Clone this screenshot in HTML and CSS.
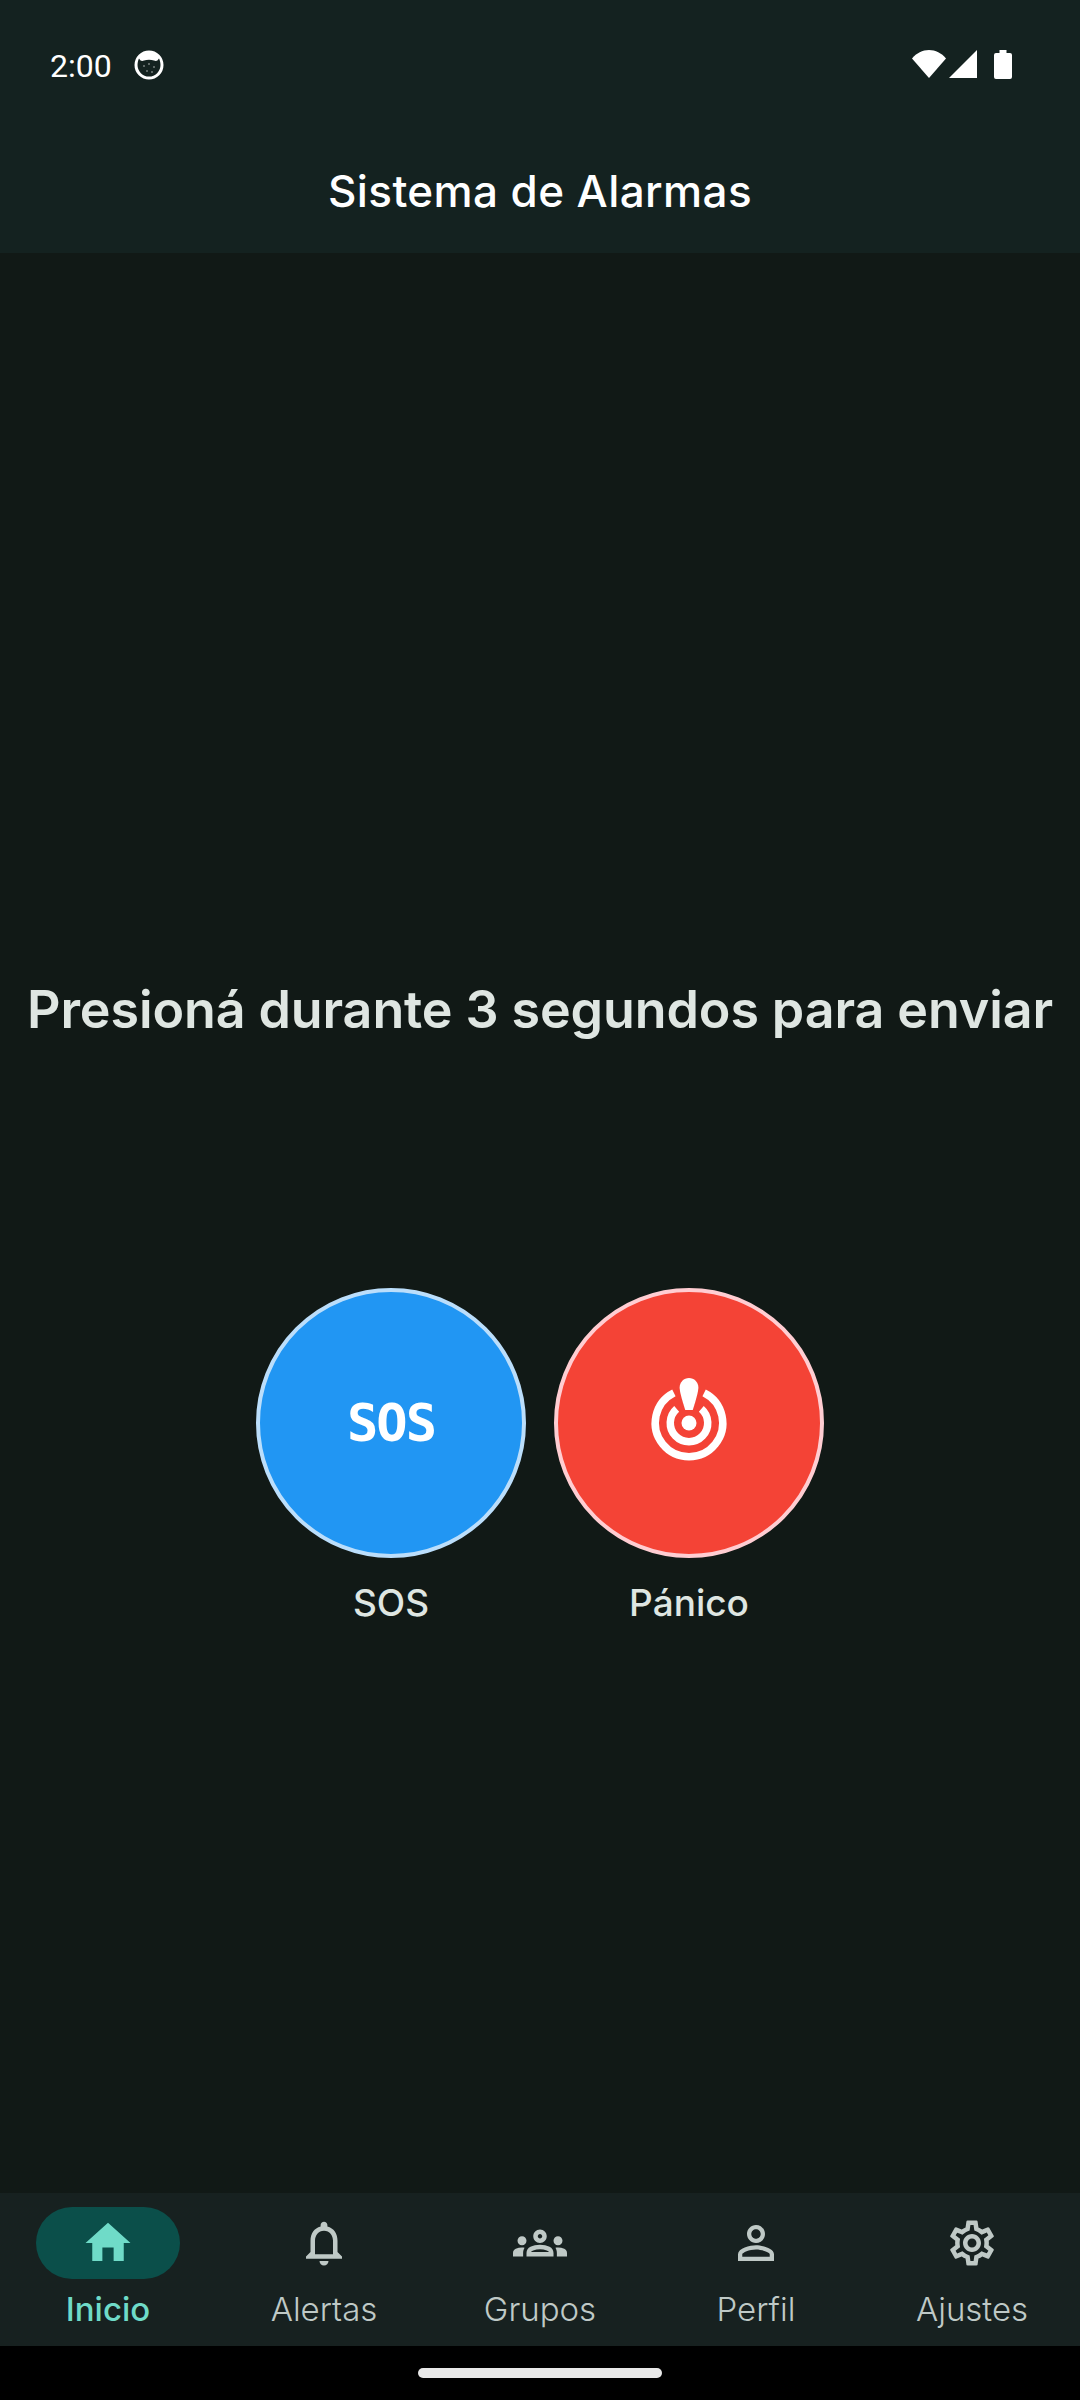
FILE: index.html
```html
<!DOCTYPE html>
<html lang="es">
<head>
	<meta charset="utf-8">
	<title>Sistema de Alarmas</title>
	<link rel="stylesheet" href="styles.css">
</head>
<body>
	<div class="pantalla">
		<header class="cabecera">
			<div class="estado">
				<span class="hora">2:00</span>
				<svg class="ico-notif" viewBox="0 0 30 30"><path fill="#fff" d="M15 0.5a14.5 14.5 0 1 0 0 29a14.5 14.5 0 1 0 0-29z"/><path fill="#142220" d="M5 8.500c1.500 2.500 3 3 5 2c3-1 7-1 10 0c2 1 3.500.5 5-2c1 2 1.500 4.500 1.500 6.500a11.500 11.500 0 0 1-23 0c0-2 .5-4.500 1.500-6.500z"/><g fill="#fff" opacity=".7"><circle cx="10" cy="16" r=".8"/><circle cx="15" cy="14" r=".8"/><circle cx="20" cy="17" r=".8"/><circle cx="13" cy="21" r=".8"/><circle cx="18" cy="22" r=".8"/></g></svg>
				<span class="hueco"></span>
				<svg class="ico-wifi" viewBox="0 0 34 28"><path fill="#fff" d="M17 28L0 8.500C4.500 3 10.500 0 17 0s12.500 3 17 8.500z"/></svg>
				<svg class="ico-red" viewBox="0 0 28 28"><path fill="#fff" d="M28 0v28H0z"/></svg>
				<svg class="ico-bat" viewBox="0 0 18 29"><path fill="#fff" d="M5.500 0h7v3H16a2 2 0 0 1 2 2v22a2 2 0 0 1-2 2H2a2 2 0 0 1-2-2V5a2 2 0 0 1 2-2h3.500z"/></svg>
			</div>
			<h1 class="titulo">Sistema de Alarmas</h1>
		</header>

		<main class="contenido">
			<p class="aviso">Presioná durante 3 segundos para enviar</p>
			<div class="botones">
				<div class="alarma">
					<button class="circulo azul"><span class="sos-marca">SOS</span></button>
					<span class="etiqueta">SOS</span>
				</div>
				<div class="alarma">
					<button class="circulo rojo">
						<svg class="ico-alarma" viewBox="0 0 24 24">
							<path fill="#fff" d="M14.500 2.500c0 1.500-1.500 6-1.500 6h-2S9.500 4 9.500 2.500C9.500 1.120 10.620 0 12 0s2.500 1.120 2.500 2.500z"/>
							<circle fill="#fff" cx="12" cy="12" r="2"/>
							<path fill="none" stroke="#fff" stroke-width="2" d="M7.970 3.950A9 9 0 1 0 16.030 3.950"/>
							<path fill="none" stroke="#fff" stroke-width="2" d="M8.720 8.230A5 5 0 1 0 15.280 8.230"/>
						</svg>
					</button>
					<span class="etiqueta">Pánico</span>
				</div>
			</div>
		</main>

		<nav class="menu">
			<a class="item activo">
				<span class="pastilla"><svg viewBox="0 0 24 24"><path d="M9.500 20v-6h5v6h4.500v-8h3L12 3 2 12h3v8z"/></svg></span>
				<span class="texto">Inicio</span>
			</a>
			<a class="item">
				<span class="pastilla"><svg viewBox="0 0 24 24"><path d="M12 22c1.100 0 2-.9 2-2h-4c0 1.100.89 2 2 2zm6-6v-5c0-3.070-1.640-5.640-4.500-6.320V4c0-.83-.67-1.500-1.500-1.500s-1.500.67-1.500 1.500v.68C7.630 5.360 6 7.920 6 11v5l-2 2v1h16v-1l-2-2zm-2 1H8v-6c0-2.480 1.510-4.500 4-4.500s4 2.020 4 4.500v6z"/></svg></span>
				<span class="texto">Alertas</span>
			</a>
			<a class="item">
				<span class="pastilla"><svg viewBox="0 0 24 24"><path d="M4 13c1.100 0 2-.9 2-2s-.9-2-2-2-2 .9-2 2 .9 2 2 2zm1.130 1.100c-.37-.06-.74-.1-1.130-.1-.99 0-1.930.21-2.780.58C.48 14.900 0 15.620 0 16.430V18h4.500v-1.610c0-.83.23-1.610.63-2.290zM20 13c1.100 0 2-.9 2-2s-.9-2-2-2-2 .9-2 2 .9 2 2 2zm4 3.430c0-.81-.48-1.530-1.220-1.850-.85-.37-1.790-.58-2.780-.58-.39 0-.76.04-1.130.1.4.68.63 1.460.63 2.290V18H24v-1.570zm-7.760-2.780C15.070 13.130 13.630 12.750 12 12.750s-3.070.38-4.240.9C6.680 14.130 6 15.210 6 16.390V18h12v-1.610c0-1.180-.68-2.260-1.760-2.740zM8.070 16c.09-.23.13-.39.91-.69.97-.38 1.990-.56 3.020-.56s2.050.18 3.020.56c.77.3.81.46.91.69H8.070zM12 8c.55 0 1 .45 1 1s-.45 1-1 1-1-.45-1-1 .45-1 1-1m0-2c-1.660 0-3 1.340-3 3s1.340 3 3 3 3-1.340 3-3-1.340-3-3-3z"/></svg></span>
				<span class="texto">Grupos</span>
			</a>
			<a class="item">
				<span class="pastilla"><svg viewBox="0 0 24 24"><path d="M12 5.900c1.160 0 2.100.94 2.100 2.100s-.94 2.100-2.100 2.100S9.900 9.160 9.900 8s.94-2.100 2.100-2.100m0 9c2.970 0 6.100 1.460 6.100 2.100v1.100H5.900V17c0-.64 3.130-2.100 6.100-2.100M12 4C9.790 4 8 5.790 8 8s1.790 4 4 4 4-1.790 4-4-1.790-4-4-4zm0 9c-2.670 0-8 1.340-8 4v3h16v-3c0-2.660-5.330-4-8-4z"/></svg></span>
				<span class="texto">Perfil</span>
			</a>
			<a class="item">
				<span class="pastilla"><svg viewBox="0 0 24 24"><path d="M19.430 12.980c.04-.32.07-.64.07-.98 0-.34-.03-.66-.07-.98l2.110-1.650c.19-.15.24-.42.12-.64l-2-3.460c-.09-.16-.26-.25-.44-.25-.06 0-.12.01-.17.03l-2.490 1c-.52-.4-1.080-.73-1.690-.98l-.38-2.650C14.460 2.180 14.250 2 14 2h-4c-.25 0-.46.18-.49.42l-.38 2.650c-.61.25-1.170.59-1.690.98l-2.490-1c-.06-.02-.12-.03-.18-.03-.17 0-.34.09-.43.25l-2 3.460c-.13.22-.07.49.12.64l2.110 1.650c-.04.32-.07.65-.07.98 0 .33.03.66.07.98l-2.110 1.650c-.19.15-.24.42-.12.64l2 3.460c.09.16.26.25.44.25.06 0 .12-.01.17-.03l2.490-1c.52.4 1.080.73 1.690.98l.38 2.650c.03.24.24.42.49.42h4c.25 0 .46-.18.49-.42l.38-2.650c.61-.25 1.170-.59 1.690-.98l2.490 1c.06.02.12.03.18.03.17 0 .34-.09.43-.25l2-3.460c.12-.22.07-.49-.12-.64l-2.110-1.650zm-1.980-1.710c.04.31.05.52.05.73 0 .21-.02.43-.05.73l-.14 1.130.89.7 1.080.84-.7 1.210-1.270-.51-1.040-.42-.9.68c-.43.32-.84.56-1.250.73l-1.060.43-.16 1.130-.2 1.350h-1.400l-.19-1.350-.16-1.130-1.060-.43c-.43-.18-.83-.41-1.230-.71l-.91-.7-1.060.43-1.270.51-.7-1.210 1.080-.84.89-.7-.14-1.130c-.03-.31-.05-.54-.05-.74s.02-.43.05-.73l.14-1.130-.89-.7-1.080-.84.7-1.210 1.270.51 1.040.42.9-.68c.43-.32.84-.56 1.250-.73l1.060-.43.16-1.130.2-1.350h1.390l.19 1.350.16 1.130 1.060.43c.43.18.83.41 1.230.71l.91.7 1.060-.43 1.270-.51.7 1.210-1.070.85-.89.7.14 1.130zM12 8c-2.210 0-4 1.790-4 4s1.790 4 4 4 4-1.790 4-4-1.790-4-4-4zm0 6c-1.100 0-2-.9-2-2s.9-2 2-2 2 .9 2 2-.9 2-2 2z"/></svg></span>
				<span class="texto">Ajustes</span>
			</a>
		</nav>

		<div class="gestos"><span class="barra"></span></div>
	</div>
</body>
</html>
```

FILE: styles.css
```css
* {
	box-sizing: border-box;
}
html, body {
	margin: 0;
	background-color: #111916;
}
.pantalla {
	width: 1080px;
	height: 2400px;
	display: flex;
	flex-direction: column;
	font-family: Inter, "Noto Sans", sans-serif;
	overflow: hidden;
}

/* barra de estado y titulo */
.cabecera {
	height: 253px;
	background-color: #142220;
}
.estado {
	height: 159px;
	padding: 50px 68px 0 50px;
	display: flex;
	align-items: flex-start;
}
.hora {
	font-family: Roboto, sans-serif;
	font-size: 32px;
	line-height: 32px;
	color: #fff;
}
.ico-notif {
	width: 30px;
	height: 30px;
	margin-left: 22px;
}
.hueco {
	flex: 1;
}
.ico-wifi {
	width: 34px;
	height: 28px;
}
.ico-red {
	width: 28px;
	height: 28px;
	margin-left: 3px;
}
.ico-bat {
	width: 18px;
	height: 29px;
	margin-left: 17px;
}
.titulo {
	margin: 0;
	text-align: center;
	font-size: 44px;
	line-height: 64px;
	font-weight: 550;
	letter-spacing: .4px;
	color: #fff;
}

/* contenido */
.contenido {
	flex: 1;
	display: flex;
	flex-direction: column;
	align-items: center;
	padding-top: 720px;
	background-color: #111916;
}
.aviso {
	margin: 0;
	font-size: 52px;
	line-height: 74px;
	font-weight: 560;
	letter-spacing: -.1px;
	color: #dfe6e2;
	white-space: nowrap;
}
.botones {
	display: flex;
	gap: 28px;
	margin-top: 241px;
}
.alarma {
	display: flex;
	flex-direction: column;
	align-items: center;
	gap: 23px;
}
.circulo {
	width: 270px;
	height: 270px;
	padding: 0;
	border-radius: 50%;
	border: 4px solid;
	display: flex;
	align-items: center;
	justify-content: center;
}
.azul {
	background-color: #2196f3;
	border-color: #bbdefb;
}
.rojo {
	background-color: #f44336;
	border-color: #ffcdd2;
}
.sos-marca {
	font-family: "DejaVu Sans Mono", monospace;
	font-weight: 700;
	font-size: 52px;
	line-height: 52px;
	color: #fff;
	letter-spacing: -2px;
}
.ico-alarma {
	width: 90px;
	height: 90px;
}
.etiqueta {
	font-size: 37px;
	line-height: 44px;
	font-weight: 500;
	color: #dfe6e2;
}

/* menu inferior */
.menu {
	height: 153px;
	display: flex;
	background-color: #172120;
}
.item {
	width: 216px;
	display: flex;
	flex-direction: column;
	align-items: center;
	padding-top: 14px;
	color: #bfc9c6;
}
.pastilla {
	width: 144px;
	height: 72px;
	border-radius: 36px;
	display: flex;
	align-items: center;
	justify-content: center;
}
.pastilla svg {
	width: 54px;
	height: 54px;
	fill: #bfc9c6;
}
.texto {
	margin-top: 9px;
	font-size: 33px;
	line-height: 42px;
	font-weight: 300;
}
.activo {
	color: #6fdbc8;
}
.activo .pastilla {
	background-color: #0b4f4a;
}
.activo .pastilla svg {
	fill: #6fdbc8;
}
.activo .texto {
	font-weight: 500;
}

.gestos {
	height: 54px;
	background-color: #000;
	display: flex;
	justify-content: center;
	padding-top: 22px;
}
.barra {
	width: 244px;
	height: 10px;
	border-radius: 5px;
	background-color: #e8e8e8;
}
```
